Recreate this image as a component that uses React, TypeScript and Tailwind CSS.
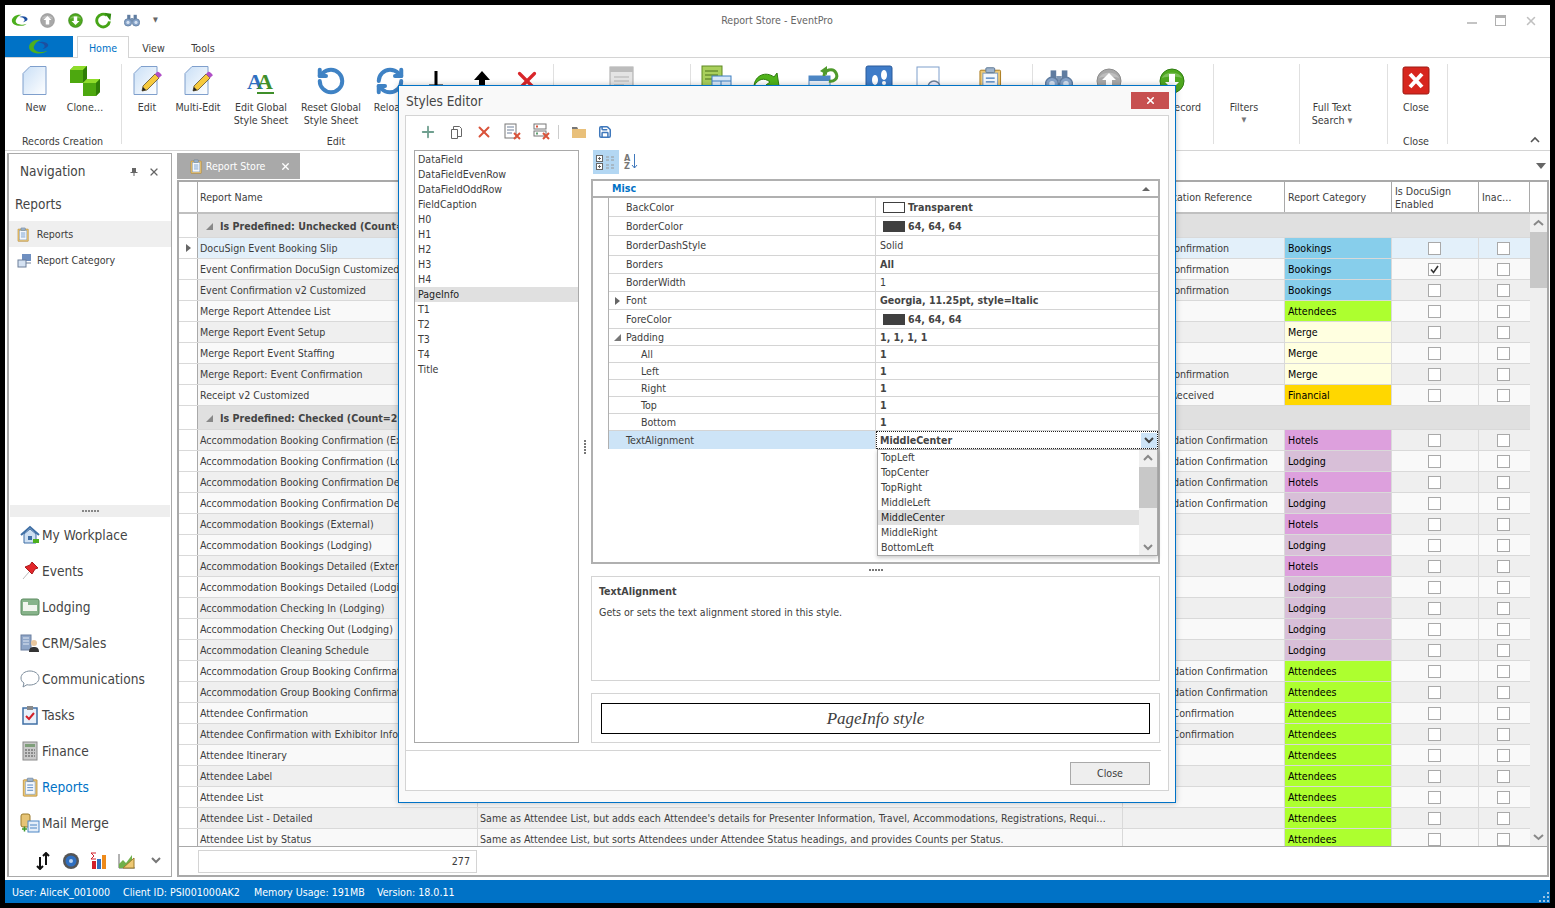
import { ReactNode } from 'react';
import { RefreshCw, RotateCcw, X, Plus, Save } from 'lucide-react';

type Btn = { w: string; icon?: ReactNode; label?: ReactNode };

const Logo = ({ s = 24 }: { s?: number }) => (
  <svg width={s} height={s * 0.7} viewBox="0 0 24 17">
    <path d="M14 1C7 0 1 4 1 9c0 4 5 7 11 7 4 0 7-1 9-3-3 1-7 2-10 1C7 13 5 10 7 7c1-3 4-5 7-6z" fill="#4caf1e" />
    <path d="M11 4c4-2 9-1 11 2 1 2-2 4-6 5 1-1 3-2 2-4-1-2-4-3-7-3z" fill="#1c4fa0" />
  </svg>
);

const RoundArrow = ({ dir, color, s = 26 }: { dir: 'up' | 'down'; color: 'gray' | 'green'; s?: number }) => (
  <svg width={s} height={s} viewBox="0 0 26 26">
    <circle cx="13" cy="13" r="12" fill={color === 'gray' ? '#a8a8a8' : '#4fa81f'} stroke={color === 'gray' ? '#8c8c8c' : '#2f7d12'} />
    <path d="M3 10C6 3 20 3 23 10 17 8 9 8 3 10z" fill="#fff" opacity=".25" />
    <path d={dir === 'up' ? 'M13 5l7 7h-4v8h-6v-8H6z' : 'M13 21l7-7h-4V6h-6v8H6z'} fill="#fff" />
  </svg>
);

const GreenRefresh = ({ s = 18 }: { s?: number }) => (
  <svg width={s} height={s} viewBox="0 0 20 20">
    <path d="M17 11a7.5 7.5 0 1 1-3-7" fill="none" stroke="#46a517" strokeWidth="3.4" />
    <path d="M11 1l8 1-1 8z" fill="#2f8a0f" />
  </svg>
);

const Binoculars = ({ s = 16 }: { s?: number }) => (
  <svg width={s} height={s * 0.8} viewBox="0 0 20 16">
    <rect x="4" y="1" width="4" height="7" fill="#5f7ca0" />
    <rect x="12" y="1" width="4" height="7" fill="#5f7ca0" />
    <rect x="8" y="5" width="4" height="4" fill="#7d96b4" />
    <circle cx="5" cy="10.5" r="4.6" fill="#86a3c8" stroke="#5f7ca0" />
    <circle cx="15" cy="10.5" r="4.6" fill="#86a3c8" stroke="#5f7ca0" />
    <circle cx="5" cy="10.5" r="2" fill="#d5e2f2" />
    <circle cx="15" cy="10.5" r="2" fill="#d5e2f2" />
  </svg>
);

const Page = ({ pencil }: { pencil?: boolean }) => (
  <svg width="30" height="32" viewBox="0 0 30 32">
    <defs>
      <linearGradient id="pg" x1="0" y1="0" x2="1" y2="1">
        <stop offset="0" stopColor="#c9dff6" />
        <stop offset="1" stopColor="#ffffff" />
      </linearGradient>
    </defs>
    <path d="M9 1.5h16v28H2v-21z" fill="url(#pg)" stroke="#7f9fcc" />
    {pencil && (
      <g>
        <path d="M10 26l1-5L23 9l4 4-12 12z" fill="#f6c93c" stroke="#4a3b20" strokeWidth=".7" />
        <path d="M23 9l2-2c1-1 3 1 4 2s1 2 0 2l-2 2z" fill="#b04fc6" />
        <path d="M10 26l1-4 3 3z" fill="#222" />
      </g>
    )}
  </svg>
);

const Cube = ({ x, y }: { x: number; y: number }) => (
  <g transform={`translate(${x} ${y})`}>
    <path d="M0 4l4-4h13v13l-4 4H0z" fill="#4da80f" />
    <path d="M0 4l4-4h13l-4 4z" fill="#8fdc2a" />
    <path d="M13 4l4-4v13l-4 4z" fill="#2f7d07" />
  </g>
);

const Cubes = () => (
  <svg width="30" height="30" viewBox="0 0 30 30">
    <Cube x={0} y={0} />
    <Cube x={13} y={13} />
  </svg>
);

const AaIcon = () => (
  <svg width="30" height="32" viewBox="0 0 30 32">
    <text y="24" fontFamily="Liberation Serif, serif" fontWeight="700" fontSize="22">
      <tspan x="1" fill="#2f6fc0">A</tspan>
      <tspan dx="-6" fill="#3f8f2a">A</tspan>
    </text>
    <rect x="11" y="27" width="17" height="2" fill="#3f8f2a" />
  </svg>
);

const FormIcon = () => (
  <svg width="30" height="32" viewBox="0 0 30 32">
    <rect x="3" y="2" width="23" height="28" fill="#e4e4e4" stroke="#a8a8a8" />
    <rect x="3" y="2" width="23" height="5" fill="#bcbcbc" />
    <path d="M7 12h15M7 16h15M7 20h10" stroke="#b0b0b0" />
  </svg>
);

const GreenTable = () => (
  <svg width="32" height="32" viewBox="0 0 32 32">
    <rect x="1" y="1" width="20" height="24" fill="#a9cf5c" stroke="#5e8a22" />
    <path d="M4 6h13M4 10h13M4 14h9" stroke="#4a701a" />
    <rect x="11" y="11" width="19" height="18" fill="#d7e8fa" stroke="#3f7fc0" />
    <path d="M11 16h19M11 22h19M20 16v13" stroke="#3f7fc0" />
  </svg>
);

const BigGreenArrow = () => (
  <svg width="30" height="30" viewBox="0 0 30 30">
    <path d="M3 20C4 9 15 5 23 11l3-4 2 13-13-1 4-3C13 11 7 13 3 20z" fill="#4fb31a" stroke="#2f7d0f" />
  </svg>
);

const CalendarBack = () => (
  <svg width="32" height="32" viewBox="0 0 32 32">
    <rect x="2" y="11" width="21" height="18" fill="#e8f0fa" stroke="#4c86c4" />
    <rect x="2" y="11" width="21" height="5" fill="#4c86c4" />
    <path d="M17 11c0-6 9-9 12-3s-3 9-7 8" fill="none" stroke="#4f9a2c" strokeWidth="3" />
    <path d="M13 6l7-5v9z" fill="#4f9a2c" />
  </svg>
);

const Steps = () => (
  <svg width="28" height="32" viewBox="0 0 28 32">
    <rect x="1" y="1" width="26" height="29" rx="2" fill="#3f7cc8" stroke="#2a5a9a" />
    <ellipse cx="10" cy="15" rx="3" ry="5" fill="#fff" />
    <ellipse cx="19" cy="10" rx="3" ry="5" fill="#fff" />
    <circle cx="10" cy="23" r="2" fill="#fff" />
    <circle cx="19" cy="18" r="2" fill="#fff" />
  </svg>
);

const DocSearch = () => (
  <svg width="30" height="32" viewBox="0 0 30 32">
    <rect x="3" y="2" width="22" height="27" fill="#fff" stroke="#7f9fcc" />
    <circle cx="20" cy="22" r="6" fill="#eef" stroke="#6d7f99" strokeWidth="1.5" />
  </svg>
);

const Clipboard = ({ s = 30 }: { s?: number }) => (
  <svg width={s * 0.85} height={s} viewBox="0 0 26 30">
    <rect x="2" y="4" width="21" height="25" rx="1" fill="#eec874" stroke="#a97a1e" />
    <rect x="5" y="7" width="15" height="19" fill="#f4f8fd" stroke="#7e9cc0" />
    <rect x="8" y="1.5" width="9" height="5" rx="1" fill="#9fb4cc" stroke="#5f7995" />
    <path d="M8 12h9M8 16h9M8 20h9" stroke="#3f78bc" strokeWidth="1.3" />
  </svg>
);

const CloseBig = () => (
  <svg width="28" height="30" viewBox="0 0 28 30">
    <rect x="1" y="1" width="26" height="27" rx="2" fill="#d7261e" stroke="#9d1a12" />
    <path d="M8 8l12 13M20 8L8 21" stroke="#fff" strokeWidth="4" />
  </svg>
);

const Sm = ({ children }: { children: ReactNode }) => (
  <svg width="20" height="20" viewBox="0 0 20 20">{children}</svg>
);

const navIcons: ReactNode[] = [
  <Sm>
    <path d="M1 10l9-8 9 8" fill="none" stroke="#3f6fa5" strokeWidth="2" />
    <path d="M4 9v9h12V9l-6-5z" fill="#cfe0f2" stroke="#3f6fa5" />
    <rect x="8" y="11" width="4" height="4" fill="#3f6fa5" />
    <rect x="13" y="14" width="6" height="4" fill="#4caf1e" />
  </Sm>,
  <Sm>
    <path d="M3 18l6-7" stroke="#bbb" />
    <path d="M12 1l6 6-3 1-3 5-7-7 5-2z" fill="#e3262a" stroke="#a81a1c" />
  </Sm>,
  <Sm>
    <rect x="1" y="2" width="18" height="16" rx="2" fill="#87b38a" stroke="#5c8b60" />
    <rect x="3" y="8" width="14" height="6" fill="#f2f5ee" />
    <rect x="3" y="5" width="5" height="3" fill="#f2f5ee" />
  </Sm>,
  <Sm>
    <rect x="1" y="2" width="10" height="15" fill="#8fa6c8" stroke="#6a7f9f" />
    <path d="M3 5h6M3 8h6M3 11h6" stroke="#dfe7f3" />
    <circle cx="14" cy="10" r="3" fill="#e9c79e" />
    <path d="M9 19c0-4 2-5 5-5s5 1 5 5z" fill="#333" />
  </Sm>,
  <Sm>
    <path d="M10 2c5 0 9 3 9 7s-4 7-9 7c-1 0-2 0-3-.3L3 18l1-4c-2-1-3-3-3-5 0-4 4-7 9-7z" fill="#fff" stroke="#7d8d9c" />
  </Sm>,
  <Sm>
    <rect x="3" y="3" width="14" height="16" fill="#e8f0fa" stroke="#3f6fa5" strokeWidth="1.5" />
    <rect x="7" y="1" width="6" height="4" fill="#8a8a8a" />
    <path d="M6 11l3 3 5-6" fill="none" stroke="#d2202a" strokeWidth="2" />
  </Sm>,
  <Sm>
    <rect x="3" y="1" width="14" height="18" fill="#c9c9c9" stroke="#8a8a8a" />
    <rect x="5" y="3" width="10" height="3" fill="#7f9f7a" />
    <path d="M5 9h10M5 12h10M5 15h10" stroke="#777" strokeDasharray="2 1" strokeWidth="1.5" />
  </Sm>,
  <Clipboard s={20} />,
  <Sm>
    <rect x="1" y="1" width="9" height="13" rx="2" fill="#e6c476" stroke="#9b7a2a" />
    <rect x="8" y="8" width="11" height="11" fill="#e4eef9" stroke="#4c86c4" />
    <path d="M10 12h7M10 15h7" stroke="#4c86c4" />
    <path d="M2 16h5M4.5 13.5v5" stroke="#3f9a2a" strokeWidth="1.5" />
  </Sm>,
];

const navItems = ['My Workplace', 'Events', 'Lodging', 'CRM/Sales', 'Communications', 'Tasks', 'Finance', 'Reports', 'Mail Merge'];

const ribbon: { cls: string; btns: Btn[] }[] = [
  {
    cls: 'w-[117px]',
    btns: [
      { w: 'w-[62px]', icon: <Page />, label: 'New' },
      { w: 'w-[36px]', icon: <Cubes />, label: 'Clone…' },
    ],
  },
  {
    cls: 'w-[432px]',
    btns: [
      { w: 'w-[50px]', icon: <Page pencil />, label: 'Edit' },
      { w: 'w-[52px]', icon: <Page pencil />, label: 'Multi-Edit' },
      { w: 'w-[74px]', icon: <AaIcon />, label: <>Edit Global<br />Style Sheet</> },
      { w: 'w-[66px]', icon: <RotateCcw size={30} color="#3f82c4" strokeWidth={3.2} />, label: <>Reset Global<br />Style Sheet</> },
      { w: 'w-[52px]', icon: <RefreshCw size={30} color="#3f82c4" strokeWidth={3.2} />, label: 'Reload' },
      {
        w: 'w-[40px]',
        icon: (
          <svg width="20" height="32" viewBox="0 0 20 32">
            <path d="M10 6v15M3 21h14" stroke="#000" strokeWidth="3" />
          </svg>
        ),
      },
      {
        w: 'w-[52px]',
        icon: (
          <svg width="20" height="32" viewBox="0 0 20 32">
            <path d="M10 6l8 9h-5v14H7V15H2z" fill="#000" />
          </svg>
        ),
      },
      { w: 'w-[38px]', icon: <X size={30} color="#d9262a" strokeWidth={2.6} /> },
    ],
  },
  { cls: 'w-[137px]', btns: [{ w: 'w-[136px]', icon: <FormIcon /> }] },
  {
    cls: 'w-[342px]',
    btns: [
      { w: 'w-[52px]', icon: <GreenTable /> },
      { w: 'w-[46px]', icon: <BigGreenArrow /> },
      { w: 'w-[68px]', icon: <CalendarBack /> },
      { w: 'w-[44px]', icon: <Steps /> },
      { w: 'w-[56px]', icon: <DocSearch /> },
      { w: 'w-[68px]', icon: <Clipboard /> },
    ],
  },
  {
    cls: 'w-[181px]',
    btns: [
      { w: 'w-[52px]', icon: <Binoculars s={28} /> },
      { w: 'w-[47px]', icon: <RoundArrow dir="up" color="gray" /> },
      { w: 'w-[80px]', icon: <RoundArrow dir="down" color="green" />, label: 'Next Record' },
    ],
  },
  {
    cls: 'w-[86px]',
    btns: [{ w: 'w-[60px]', label: <>Filters<br /><span className="text-[7px] leading-[13px] text-[#777] block">▼</span></> }],
  },
  {
    cls: 'w-[88px]',
    btns: [{ w: 'w-[64px]', label: <>Full Text<br />Search <span className="text-[7px] text-[#777] align-[1px]">▼</span></> }],
  },
  { cls: 'w-[60px]', btns: [{ w: 'w-[56px]', icon: <CloseBig />, label: 'Close' }] },
];

const groupLabels = [
  { text: 'Records Creation', cls: 'w-[115px]' },
  { text: 'Edit', cls: 'w-[432px]' },
  { text: '', cls: 'w-[137px]' },
  { text: '', cls: 'w-[342px]' },
  { text: '', cls: 'w-[181px]' },
  { text: '', cls: 'w-[86px]' },
  { text: '', cls: 'w-[90px]' },
  { text: 'Close', cls: 'w-[56px]' },
];

type Row = { name: string; desc?: string; ref?: string; cat: string; checked?: boolean };

const catColor: Record<string, string> = {
  Bookings: 'bg-[#87ceeb]',
  Attendees: 'bg-[#adff2f]',
  Merge: 'bg-[#ffffe0]',
  Financial: 'bg-[#ffd700]',
  Hotels: 'bg-[#dda0dd]',
  Lodging: 'bg-[#d8bfd8]',
};

const unchecked: Row[] = [
  { name: 'DocuSign Event Booking Slip', ref: 'Booking Confirmation', cat: 'Bookings' },
  { name: 'Event Confirmation DocuSign Customized', ref: 'Booking Confirmation', cat: 'Bookings', checked: true },
  { name: 'Event Confirmation v2 Customized', ref: 'Booking Confirmation', cat: 'Bookings' },
  { name: 'Merge Report Attendee List', cat: 'Attendees' },
  { name: 'Merge Report Event Setup', cat: 'Merge' },
  { name: 'Merge Report Event Staffing', cat: 'Merge' },
  { name: 'Merge Report: Event Confirmation', ref: 'Booking Confirmation', cat: 'Merge' },
  { name: 'Receipt v2 Customized', ref: 'Payment Received', cat: 'Financial' },
];

const acc = 'Accommodation Confirmation';
const att = 'Attendee Confirmation';
const checkedRows: Row[] = [
  { name: 'Accommodation Booking Confirmation (External)', ref: acc, cat: 'Hotels' },
  { name: 'Accommodation Booking Confirmation (Lodging)', ref: acc, cat: 'Lodging' },
  { name: 'Accommodation Booking Confirmation Detailed (External)', ref: acc, cat: 'Hotels' },
  { name: 'Accommodation Booking Confirmation Detailed (Lodging)', ref: acc, cat: 'Lodging' },
  { name: 'Accommodation Bookings (External)', cat: 'Hotels' },
  { name: 'Accommodation Bookings (Lodging)', cat: 'Lodging' },
  { name: 'Accommodation Bookings Detailed (External)', cat: 'Hotels' },
  { name: 'Accommodation Bookings Detailed (Lodging)', cat: 'Lodging' },
  { name: 'Accommodation Checking In (Lodging)', cat: 'Lodging' },
  { name: 'Accommodation Checking Out (Lodging)', cat: 'Lodging' },
  { name: 'Accommodation Cleaning Schedule', cat: 'Lodging' },
  { name: 'Accommodation Group Booking Confirmation', ref: acc, cat: 'Attendees' },
  { name: 'Accommodation Group Booking Confirmation Detailed', ref: acc, cat: 'Attendees' },
  { name: 'Attendee Confirmation', ref: att, cat: 'Attendees' },
  { name: 'Attendee Confirmation with Exhibitor Information', ref: att, cat: 'Attendees' },
  { name: 'Attendee Itinerary', cat: 'Attendees' },
  { name: 'Attendee Label', cat: 'Attendees' },
  { name: 'Attendee List', cat: 'Attendees' },
  {
    name: 'Attendee List - Detailed',
    desc: "Same as Attendee List, but adds each Attendee's details for Presenter Information, Travel, Accommodations, Registrations, Requi…",
    cat: 'Attendees',
  },
  {
    name: 'Attendee List by Status',
    desc: 'Same as Attendee List, but sorts Attendees under Attendee Status headings, and provides Counts per Status.',
    cat: 'Attendees',
  },
];

const Check = ({ on }: { on?: boolean }) => (
  <span className="w-[13px] h-[13px] border border-[#a9a9a9] bg-white flex items-center justify-center">
    {on && (
      <svg width="11" height="11" viewBox="0 0 11 11">
        <path d="M2 5.5l2.5 3L9 2" fill="none" stroke="#333" strokeWidth="1.6" />
      </svg>
    )}
  </span>
);

const GridRow = ({ row, index, active }: { row: Row; index: number; active?: boolean }) => {
  const bg = active ? 'bg-[#e3f0fa]' : index % 2 === 0 ? 'bg-[#efefef]' : 'bg-[#f9f9f9]';
  return (
    <div className={`flex h-[21px] border-b border-[#d9d9d9] ${bg}`}>
      <div className="w-[19px] shrink-0 bg-white border-r border-[#a9a9a9] flex items-center justify-center">
        {active && <span className="w-0 h-0 border-y-[4px] border-y-transparent border-l-[5px] border-l-[#666]" />}
      </div>
      <div className="w-[280px] shrink-0 px-[2px] pt-[1px] border-r border-[#d9d9d9] overflow-hidden whitespace-nowrap leading-[19px]">{row.name}</div>
      <div className="w-[645px] shrink-0 px-[2px] pt-[1px] border-r border-[#d9d9d9] overflow-hidden whitespace-nowrap leading-[19px]">{row.desc}</div>
      <div className="w-[162px] shrink-0 px-[3px] pt-[1px] border-r border-[#d9d9d9] overflow-hidden whitespace-nowrap leading-[19px]">{row.ref}</div>
      <div className={`w-[107px] shrink-0 px-[3px] pt-[1px] border-r border-[#d9d9d9] text-black leading-[19px] ${catColor[row.cat]}`}>{row.cat}</div>
      <div className="w-[87px] shrink-0 border-r border-[#d9d9d9] flex items-center justify-center pr-[2px]"><Check on={row.checked} /></div>
      <div className="w-[51px] shrink-0 flex items-center justify-center pr-[2px]"><Check /></div>
    </div>
  );
};

const GroupRow = ({ text }: { text: string }) => (
  <div className="flex h-[24px] bg-[#e0e0e0] border-b border-[#d9d9d9]">
    <div className="w-[19px] shrink-0 bg-white border-r border-[#a9a9a9]" />
    <div className="flex items-center pl-[8px] pt-[2px] gap-[7px] font-bold text-[#444]">
      <span className="w-0 h-0 border-l-[7px] border-l-transparent border-b-[7px] border-b-[#888]" />
      {text}
    </div>
  </div>
);

const swatchOn = 'w-[22px] h-[11px] bg-[#404040] inline-block ml-[3px] mr-[3px]';

const props: { name: string; value?: ReactNode; h: string; sub?: boolean; exp?: string; bold?: boolean }[] = [
  { name: 'BackColor', h: 'h-[19px]', bold: true, value: <><span className="w-[22px] h-[11px] border border-[#404040] bg-white inline-block ml-[3px] mr-[3px]" />Transparent</> },
  { name: 'BorderColor', h: 'h-[19px]', bold: true, value: <><span className={swatchOn} />64, 64, 64</> },
  { name: 'BorderDashStyle', h: 'h-[20px]', value: 'Solid' },
  { name: 'Borders', h: 'h-[18px]', bold: true, value: 'All' },
  { name: 'BorderWidth', h: 'h-[18px]', value: '1' },
  { name: 'Font', h: 'h-[18px]', exp: 'r', bold: true, value: 'Georgia, 11.25pt, style=Italic' },
  { name: 'ForeColor', h: 'h-[19px]', bold: true, value: <><span className={swatchOn} />64, 64, 64</> },
  { name: 'Padding', h: 'h-[17px]', exp: 'd', bold: true, value: '1, 1, 1, 1' },
  { name: 'All', h: 'h-[17px]', sub: true, bold: true, value: '1' },
  { name: 'Left', h: 'h-[17px]', sub: true, bold: true, value: '1' },
  { name: 'Right', h: 'h-[17px]', sub: true, bold: true, value: '1' },
  { name: 'Top', h: 'h-[17px]', sub: true, bold: true, value: '1' },
  { name: 'Bottom', h: 'h-[17px]', sub: true, bold: true, value: '1' },
];

const styleNames = ['DataField', 'DataFieldEvenRow', 'DataFieldOddRow', 'FieldCaption', 'H0', 'H1', 'H2', 'H3', 'H4', 'PageInfo', 'T1', 'T2', 'T3', 'T4', 'Title'];
const alignOpts = ['TopLeft', 'TopCenter', 'TopRight', 'MiddleLeft', 'MiddleCenter', 'MiddleRight', 'BottomLeft'];

const ListX = ({ alt }: { alt?: boolean }) => (
  <svg width="18" height="18" viewBox="0 0 18 18">
    {alt ? (
      <>
        <rect x="1" y="1" width="12" height="5" fill="#fff" stroke="#777" />
        <rect x="1" y="8" width="12" height="5" fill="#fff" stroke="#777" />
        <path d="M3 3.5h2" stroke="#d9533a" strokeWidth="2" />
        <path d="M3 10.5h2" stroke="#5f9f70" strokeWidth="2" />
      </>
    ) : (
      <>
        <rect x="1" y="1" width="11" height="14" fill="#fff" stroke="#777" />
        <path d="M3 4h7M3 7h7M3 10h5" stroke="#6d7f99" />
      </>
    )}
    <path d="M10 10l6 6M16 10l-6 6" stroke="#d9533a" strokeWidth="2" />
  </svg>
);

function StylesEditor() {
  return (
    <div className="absolute left-[398px] top-[85px] w-[778px] h-[718px] border border-[#0072c6] bg-[#f9f9f9] flex flex-col shadow-[0_0_6px_rgba(0,0,0,0.25)]">
      <div className="h-[29px] shrink-0 flex items-start justify-between pl-[7px] pr-[6px]">
        <span className="text-[13.5px] leading-[30px] text-[#444]">Styles Editor</span>
        <span className="mt-[6px] w-[38px] h-[17px] bg-[#c75050] flex items-center justify-center">
          <X size={11} color="#fff" strokeWidth={3.5} />
        </span>
      </div>
      <div className="mx-[6px] h-[676px] border border-[#d4d4d4] bg-white flex flex-col">
        <div className="h-[34px] shrink-0 flex items-center pl-[13px] gap-[11px] pb-[2px]">
          <Plus size={18} color="#6f9f8f" strokeWidth={2.4} />
          <svg width="15" height="15" viewBox="0 0 15 15" className="ml-[1px]">
            <path d="M4.500 1.500h6l2 2v8h-8z" fill="#fff" stroke="#666" />
            <path d="M2.500 4.500h6v9h-6z" fill="#fff" stroke="#666" />
          </svg>
          <X size={18} color="#d9533a" strokeWidth={2.6} />
          <ListX />
          <ListX alt />
          <span className="w-px h-[14px] bg-[#ccc] ml-[-4px]" />
          <svg width="14" height="12" viewBox="0 0 14 12" className="ml-[2px]">
            <path d="M0 1h5l1 2h8v9H0z" fill="#e9c07a" />
            <path d="M0 1h5l1 2H0z" fill="#777" />
          </svg>
          <Save size={14} color="#3f78bc" strokeWidth={2.6} className="ml-[1px]" />
        </div>
        <div className="flex h-[600px] shrink-0 pl-[8px]">
          <div className="w-[165px] h-[593px] border border-[#a9a9a9] py-[1px] shrink-0">
            {styleNames.map((n) => (
              <div key={n} className={`h-[15px] leading-[15px] pl-[3px] ${n === 'PageInfo' ? 'bg-[#e0e0e0] text-[#222]' : ''}`}>{n}</div>
            ))}
          </div>
          <div className="w-[12px] shrink-0 flex flex-col items-center justify-center gap-[1px] h-[593px]">
            {[0, 1, 2, 3, 4].map((i) => <span key={i} className="w-[2px] h-[2px] bg-[#777]" />)}
          </div>
          <div className="w-[569px] shrink-0 flex flex-col">
            <div className="h-[29px] shrink-0 pl-[2px] flex items-start">
              <span className="w-[26px] h-[24px] bg-[#b3d7f3] flex flex-col justify-center items-center gap-[2px]">
                <svg width="20" height="18" viewBox="0 0 20 18">
                  <rect x=".5" y="2.5" width="6" height="6" fill="#fff" stroke="#666" />
                  <rect x=".5" y="10.500" width="6" height="6" fill="#fff" stroke="#666" />
                  <path d="M2 5.500h3M3.500 4v3M2 13.500h3M3.500 12v3" stroke="#666" />
                  <path d="M10 4h3M15 4h3M10 7h3M15 7h3M10 12h3M15 12h3M10 15h3M15 15h3" stroke="#999" />
                </svg>
              </span>
              <span className="ml-[5px] w-[16px] h-[24px] flex items-center text-[9px] leading-[8px] font-bold text-[#777]">
                <span className="flex flex-col">
                  <span>A</span>
                  <span>Z</span>
                </span>
                <svg width="7" height="16" viewBox="0 0 7 16" className="ml-[1px]">
                  <path d="M3.500 0v14M1 11l2.500 3L6 11" fill="none" stroke="#3f78bc" />
                </svg>
              </span>
            </div>
            <div className="h-[385px] shrink-0 border-2 border-[#b0b0b0] bg-white flex flex-col">
              <div className="h-[17px] shrink-0 flex items-center justify-between pl-[19px] pr-[8px] border-b-2 border-[#b0b0b0]">
                <span className="font-bold text-[#0072c6] leading-[15px]">Misc</span>
                <span className="w-0 h-0 border-x-[4px] border-x-transparent border-b-[4px] border-b-[#666]" />
              </div>
              <div className="ml-[15px] flex flex-col border-l border-[#b0b0b0]">
                {props.map((p) => (
                  <div key={p.name} className={`flex ${p.h} border-b border-[#d4d4d4]`}>
                    <div className={`w-[267px] shrink-0 border-r border-[#d4d4d4] flex items-center relative pt-[1px] ${p.sub ? 'pl-[32px]' : 'pl-[17px]'}`}>
                      {p.exp === 'r' && <span className="absolute left-[6px] w-0 h-0 border-y-[4px] border-y-transparent border-l-[5px] border-l-[#666]" />}
                      {p.exp === 'd' && <span className="absolute left-[5px] w-0 h-0 border-l-[7px] border-l-transparent border-b-[7px] border-b-[#777]" />}
                      {p.name}
                    </div>
                    <div className={`flex-1 flex items-center pl-[4px] pt-[1px] ${p.bold ? 'font-bold text-[#444]' : ''}`}>{p.value}</div>
                  </div>
                ))}
                <div className="flex h-[18px]">
                  <div className="w-[267px] shrink-0 bg-[#cde4f7] border-r border-[#d4d4d4] pl-[17px] pt-[1px] flex items-center">TextAlignment</div>
                  <div className="flex-1 flex items-center justify-between pl-[3px] pt-[1px] border border-dotted border-[#222] font-bold text-[#444]">
                    MiddleCenter
                    <span className="w-[16px] h-full bg-[#cde4f7] flex items-center justify-center">
                      <svg width="10" height="7" viewBox="0 0 10 7"><path d="M1 1l4 4 4-4" fill="none" stroke="#444" strokeWidth="2" /></svg>
                    </span>
                  </div>
                </div>
              </div>
              <div className="absolute left-[478px] top-[363px] w-[281px] h-[107px] bg-white border border-[#a9a9a9] flex shadow-[0_2px_4px_rgba(0,0,0,0.2)]">
                <div className="flex-1">
                  {alignOpts.map((o) => (
                    <div key={o} className={`h-[15px] leading-[15px] pl-[3px] ${o === 'MiddleCenter' ? 'bg-[#e0e0e0] text-[#222]' : ''}`}>{o}</div>
                  ))}
                </div>
                <div className="w-[18px] bg-[#efefef] flex flex-col items-center">
                  <svg width="18" height="17" viewBox="0 0 18 17"><path d="M5 10l4-4 4 4" fill="none" stroke="#888" strokeWidth="2" /></svg>
                  <div className="w-full h-[41px] bg-[#c8c8c8]" />
                  <div className="flex-1" />
                  <svg width="18" height="17" viewBox="0 0 18 17"><path d="M5 7l4 4 4-4" fill="none" stroke="#888" strokeWidth="2" /></svg>
                </div>
              </div>
            </div>
            <div className="h-[12px] shrink-0 flex items-center justify-center gap-[1px]">
              {[0, 1, 2, 3, 4].map((i) => <span key={i} className="w-[2px] h-[2px] bg-[#777]" />)}
            </div>
            <div className="h-[105px] shrink-0 border border-[#d4d4d4] px-[7px] pt-[7px]">
              <div className="font-bold text-[#444] leading-[15px]">TextAlignment</div>
              <div className="mt-[6px] leading-[15px]">Gets or sets the text alignment stored in this style.</div>
            </div>
            <div className="mt-[12px] h-[50px] shrink-0 border border-[#d4d4d4] p-[9px]">
              <div className="h-[31px] border border-black flex items-center justify-center font-['Liberation_Serif',serif] italic text-[17px] text-[#404040]">PageInfo style</div>
            </div>
          </div>
        </div>
        <div className="mr-[7px] h-px bg-[#d4d4d4] shrink-0" />
        <div className="flex-1 flex items-start justify-end pr-[18px] pt-[11px]">
          <span className="w-[80px] h-[23px] bg-[#eee] border border-[#a9a9a9] pt-[1px] flex items-center justify-center">Close</span>
        </div>
      </div>
    </div>
  );
}

export default function App() {
  return (
    <div className="relative w-[1555px] h-[908px] bg-black p-[5px] overflow-hidden font-['DejaVu_Sans_Condensed','Liberation_Sans',sans-serif] text-[10.6px] text-[#3c3c3c]">
      <div className="w-full h-full bg-white flex flex-col">
        {/* title bar */}
        <div className="h-[31px] shrink-0 flex items-center relative">
          <div className="flex items-center pl-[3px] h-full">
            <span className="w-[23px] flex justify-center"><Logo s={18} /></span>
            <span className="w-[33px] flex justify-center"><RoundArrow dir="up" color="gray" s={15} /></span>
            <span className="w-[23px] flex justify-center"><RoundArrow dir="down" color="green" s={15} /></span>
            <span className="w-[33px] flex justify-center"><GreenRefresh s={17} /></span>
            <span className="w-[24px] flex justify-center"><Binoculars s={16} /></span>
            <span className="ml-[9px] text-[7px] text-[#666]">▼</span>
          </div>
          <span className="absolute left-0 right-[1px] top-[8px] text-center text-[#666] pointer-events-none">Report Store - EventPro</span>
          <div className="ml-auto flex items-center gap-[18px] pr-[12px] text-[#b0b0b0]">
            <span className="w-[10px] h-[2px] bg-[#c4c4c4] mt-[5px]" />
            <span className="w-[11px] h-[11px] border border-[#b0b0b0] border-t-[3px]" />
            <X size={14} color="#c0c0c0" strokeWidth={2.6} />
          </div>
        </div>
        {/* tab row */}
        <div className="h-[22px] shrink-0 flex border-b border-[#d4d4d4]">
          <div className="w-[68px] bg-[#0072c6] flex items-center justify-center"><Logo s={22} /></div>
          <div className="ml-[4px] w-[52px] h-[22px] border border-b-0 border-[#d4d4d4] bg-white text-[#0072c6] flex items-center justify-center pt-[3px]">Home</div>
          <div className="w-[49px] flex items-center justify-center pt-[4px]">View</div>
          <div className="w-[50px] flex items-center justify-center pt-[4px]">Tools</div>
        </div>
        {/* ribbon */}
        <div className="h-[93px] shrink-0 border-b border-[#d4d4d4] relative">
          <div className="flex pt-[6px] h-[77px]">
            {ribbon.map((g, i) => (
              <div key={i} className={`${g.cls} shrink-0 flex border-r border-[#e0e0e0] h-[80px]`}>
                {g.btns.map((b, j) => (
                  <div key={j} className={`${b.w} shrink-0 flex flex-col items-center`}>
                    <div className="h-[33px] flex items-center justify-center">{b.icon}</div>
                    <div className="mt-[4px] text-center leading-[13px] whitespace-nowrap">{b.label}</div>
                  </div>
                ))}
              </div>
            ))}
          </div>
          <div className="flex h-[13px] leading-[13px] text-center">
            {groupLabels.map((l, i) => (
              <div key={i} className={`${l.cls} shrink-0`}>{l.text}</div>
            ))}
          </div>
          <svg width="10" height="7" viewBox="0 0 10 7" className="absolute right-[10px] bottom-[7px]">
            <path d="M1 6l4-4 4 4" fill="none" stroke="#555" strokeWidth="1.6" />
          </svg>
        </div>
        {/* main */}
        <div className="flex-1 min-h-0 flex pt-[2px] pb-[3px] pl-[2px] pr-[2px]">
          <div className="w-[165px] shrink-0 border border-[#a9a9a9] border-l-2 flex flex-col">
            <div className="h-[35px] shrink-0 flex items-center pl-[11px] pr-[11px]">
              <span className="text-[13.5px] text-[#444]">Navigation</span>
              <span className="ml-auto mr-[10px]">
                <svg width="8" height="10" viewBox="0 0 8 10"><path d="M2 1h4v4h1.500v1H4.500v3h-1V6H.5V5H2z" fill="#666" /></svg>
              </span>
              <X size={12} color="#666" strokeWidth={2.4} />
            </div>
            <div className="h-[30px] shrink-0 pl-[6px] text-[13.5px] leading-[30px] text-[#444]">Reports</div>
            <div className="h-[26px] mt-[2px] shrink-0 bg-[#efefef] flex items-center pl-[8px] gap-[7px]">
              <Clipboard s={15} />
              <span className="pt-[1px]">Reports</span>
            </div>
            <div className="h-[26px] shrink-0 flex items-center pl-[8px] gap-[5px]">
              <svg width="15" height="15" viewBox="0 0 15 15">
                <rect x="5" y="1" width="9" height="7" fill="#6f8fc0" />
                <rect x="1" y="7" width="8" height="7" fill="#d5e2f2" stroke="#6d7f99" />
                <path d="M9 10h5" stroke="#6d7f99" />
              </svg>
              <span className="pt-[1px]">Report Category</span>
            </div>
            <div className="flex-1" />
            <div className="h-[12px] shrink-0 mx-[1px] bg-[#eee] flex items-center justify-center gap-[1px]">
              {[0, 1, 2, 3, 4, 5].map((i) => <span key={i} className="w-[2px] h-[2px] bg-[#888]" />)}
            </div>
            <div className="h-[324px] shrink-0 flex flex-col">
              {navItems.map((n, i) => (
                <div key={n} className="h-[36px] shrink-0 flex items-center pl-[11px] gap-[2px]">
                  <span className="w-[20px] h-[20px] flex items-center justify-center">{navIcons[i]}</span>
                  <span className={`text-[13.6px] ${n === 'Reports' ? 'text-[#0072c6]' : 'text-[#444]'}`}>{n}</span>
                </div>
              ))}
            </div>
            <div className="h-[35px] shrink-0 flex items-center pl-[25px] gap-[10px] pt-[6px] pb-[2px]">
              <svg width="18" height="18" viewBox="0 0 18 18"><path d="M6 5v12M3 14l3 3 3-3M12 13V1M9 4l3-3 3 3" fill="none" stroke="#111" strokeWidth="2" /></svg>
              <svg width="18" height="18" viewBox="0 0 18 18"><circle cx="9" cy="9" r="8" fill="#555" /><circle cx="9" cy="9" r="5.500" fill="#2f6fc0" /><circle cx="9" cy="9" r="2" fill="#bcd4f0" /></svg>
              <svg width="18" height="18" viewBox="0 0 18 18"><rect x="2" y="9" width="4" height="8" fill="#d2202a" /><rect x="7" y="7" width="4" height="10" fill="#2f6fc0" /><rect x="12" y="3" width="4" height="14" fill="#ee8a1a" /><path d="M1 1h5M1 1l3 3-3 3h5" fill="none" stroke="#d2202a" /></svg>
              <svg width="18" height="18" viewBox="0 0 18 18"><path d="M1 16V2M1 16h16" stroke="#666" /><path d="M1 12l4-4 3 3 6-8v13H1z" fill="#6fb04a" /><path d="M5 16L16 6v10z" fill="#eec874" stroke="#9b7a2a" /></svg>
              <svg width="10" height="7" viewBox="0 0 10 7" className="ml-[5px]"><path d="M1 1l4 4 4-4" fill="none" stroke="#777" strokeWidth="2" /></svg>
            </div>
          </div>
          <div className="w-[5px] shrink-0" />
          <div className="w-[1372px] shrink-0 flex flex-col">
            <div className="h-[27px] shrink-0 flex relative">
              <div className="w-[123px] h-[26px] bg-[#a9a9a9] flex items-center pl-[13px] gap-[3px]">
                <Clipboard s={15} />
                <span className="text-white pt-[1px]">Report Store</span>
                <X size={11} color="#fff" strokeWidth={3} className="ml-[12px]" />
              </div>
              <svg width="10" height="6" viewBox="0 0 10 6" className="absolute right-[3px] top-[10px]"><path d="M0 0h10L5 6z" fill="#666" /></svg>
            </div>
            <div className="flex-1 min-h-0 border-2 border-[#a9a9a9] flex flex-col">
              <div className="h-[32px] shrink-0 flex border-b-2 border-[#c0c0c0]">
                <div className="w-[19px] shrink-0 border-r border-[#a9a9a9]" />
                <div className="w-[280px] shrink-0 border-r border-[#a9a9a9] px-[2px] pt-[1px] flex items-center">Report Name</div>
                <div className="w-[645px] shrink-0 border-r border-[#a9a9a9] px-[2px] pt-[1px] flex items-center">Report Description</div>
                <div className="w-[162px] shrink-0 border-r border-[#a9a9a9] px-[3px] pt-[1px] flex items-center">Communication Reference</div>
                <div className="w-[107px] shrink-0 border-r border-[#a9a9a9] px-[3px] pt-[1px] flex items-center">Report Category</div>
                <div className="w-[87px] shrink-0 border-r border-[#a9a9a9] px-[3px] pt-[1px] flex items-center leading-[13px]">Is DocuSign<br />Enabled</div>
                <div className="w-[51px] shrink-0 border-r border-[#a9a9a9] px-[3px] pt-[1px] flex items-center">Inac…</div>
              </div>
              <div className="flex-1 min-h-0 flex overflow-hidden">
                <div className="w-[1351px] shrink-0 overflow-hidden">
                  <GroupRow text="Is Predefined: Unchecked (Count=8)" />
                  {unchecked.map((r, i) => <GridRow key={r.name} row={r} index={i} active={i === 0} />)}
                  <GroupRow text="Is Predefined: Checked (Count=269)" />
                  {checkedRows.map((r, i) => <GridRow key={r.name} row={r} index={i} />)}
                </div>
                <div className="w-[17px] shrink-0 bg-[#efefef] flex flex-col items-center">
                  <svg width="17" height="18" viewBox="0 0 17 18"><path d="M4 11l4.500-4 4.500 4" fill="none" stroke="#888" strokeWidth="2" /></svg>
                  <div className="w-full h-[56px] bg-[#c8c8c8]" />
                  <div className="flex-1" />
                  <svg width="17" height="18" viewBox="0 0 17 18"><path d="M4 7l4.500 4 4.500-4" fill="none" stroke="#888" strokeWidth="2" /></svg>
                </div>
              </div>
              <div className="h-[29px] shrink-0 border-t border-[#a9a9a9] flex items-center pl-[19px]">
                <div className="w-[279px] h-[23px] border border-[#d4d4d4] flex items-center justify-end pr-[6px] pt-[1px]">277</div>
              </div>
            </div>
          </div>
        </div>
        {/* status bar */}
        <div className="h-[23px] shrink-0 bg-[#0072c6] text-white flex items-center pl-[7px] pt-[2px] relative whitespace-nowrap">
          <span className="w-[111px]">User: AliceK_001000</span>
          <span className="w-[131px]">Client ID: PSI001000AK2</span>
          <span className="w-[123px]">Memory Usage: 191MB</span>
          <span>Version: 18.0.11</span>
          <svg width="10" height="10" viewBox="0 0 10 10" className="absolute right-[1px] bottom-[1px]">
            <path d="M8 0h2v2H8zM4 4h2v2H4zM8 4h2v2H8zM0 8h2v2H0zM4 8h2v2H4zM8 8h2v2H8z" fill="#9cc4e4" />
          </svg>
        </div>
      </div>
      <StylesEditor />
    </div>
  );
}
